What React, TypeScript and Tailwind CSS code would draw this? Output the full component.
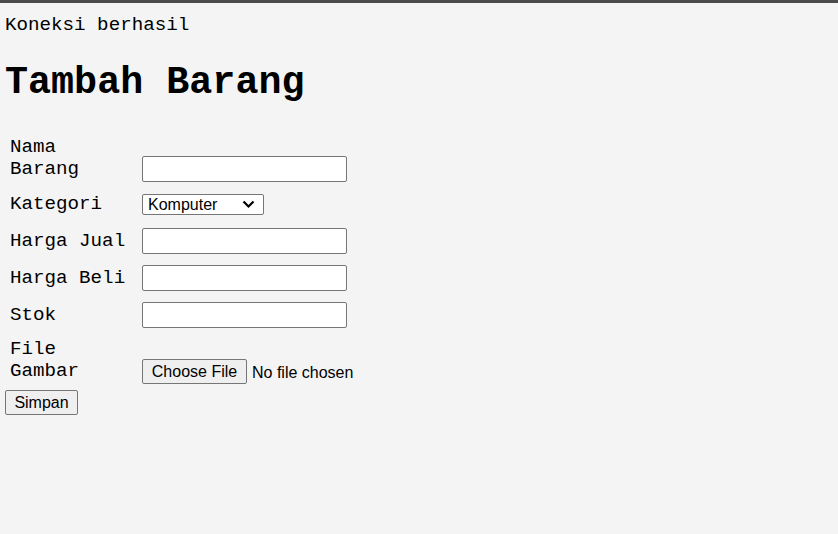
import * as React from "react";

const mono = { fontFamily: '"Liberation Mono", "Courier New", monospace' };
const sans = { fontFamily: '"Liberation Sans", Arial, sans-serif' };

function TextBox() {
  return (
    <input
      type="text"
      className="block w-[205px] h-[26px] bg-white border border-[#767676] rounded-[2px] px-[2px] text-[16px] outline-none"
    />
  );
}

function Row({
  label,
  children,
  multi,
  className,
}: {
  label: React.ReactNode;
  children: React.ReactNode;
  multi?: boolean;
  className?: string;
}) {
  return (
    <div className={`flex ${multi ? "items-end" : "items-center"} ${className ?? ""}`}>
      <div className={`w-[137px] pl-[5px] text-[19.2px] leading-[22px] ${multi ? "mb-[2px]" : ""}`}>
        {label}
      </div>
      {children}
    </div>
  );
}

export default function App() {
  return (
    <div className="min-h-screen bg-[#f4f4f4] text-black" style={mono}>
      <div className="h-[3px] bg-[#4b4b4d]" />
      <div className="pl-[5px] pt-[11px]">
        <p className="text-[19.2px] leading-[22px]">Koneksi berhasil</p>
        <h1 className="mt-[25px] text-[38.4px] leading-[44px] font-bold">Tambah Barang</h1>

        <form className="mt-[31px]" onSubmit={(e) => e.preventDefault()}>
          <Row label={<>Nama<br />Barang</>} multi>
            <TextBox />
          </Row>
          <Row label="Kategori" className="mt-[11px]">
            <div className="relative w-[122px] h-[21px] bg-white border border-[#767676] rounded-[2px]">
              <span className="absolute left-[5px] top-0 text-[16px] leading-[19px]" style={sans}>
                Komputer
              </span>
              <svg
                className="absolute right-[8px] top-[5px]"
                width="13"
                height="9"
                viewBox="0 0 13 9"
                fill="none"
              >
                <path d="M1.5 1.5 L6.5 6.5 L11.5 1.5" stroke="#000" strokeWidth="2.2" />
              </svg>
            </div>
          </Row>
          <Row label="Harga Jual" className="mt-[13px]">
            <TextBox />
          </Row>
          <Row label="Harga Beli" className="mt-[11px]">
            <TextBox />
          </Row>
          <Row label="Stok" className="mt-[11px]">
            <TextBox />
          </Row>
          <Row label={<>File<br />Gambar</>} multi className="mt-[10px]">
            <div className="flex items-center text-[16px]" style={sans}>
              <button
                type="button"
                className="h-[25px] w-[105px] bg-[#efefef] border border-[#767676] rounded-[2px] text-[16px] leading-[20px]"
              >
                Choose File
              </button>
              <span className="ml-[5px] leading-[20px] mt-[2px]">No file chosen</span>
            </div>
          </Row>
          <button
            type="submit"
            className="mt-[6px] h-[25px] w-[73px] bg-[#efefef] border border-[#767676] rounded-[2px] text-[16px] leading-[20px]"
            style={sans}
          >
            Simpan
          </button>
        </form>
      </div>
    </div>
  );
}
